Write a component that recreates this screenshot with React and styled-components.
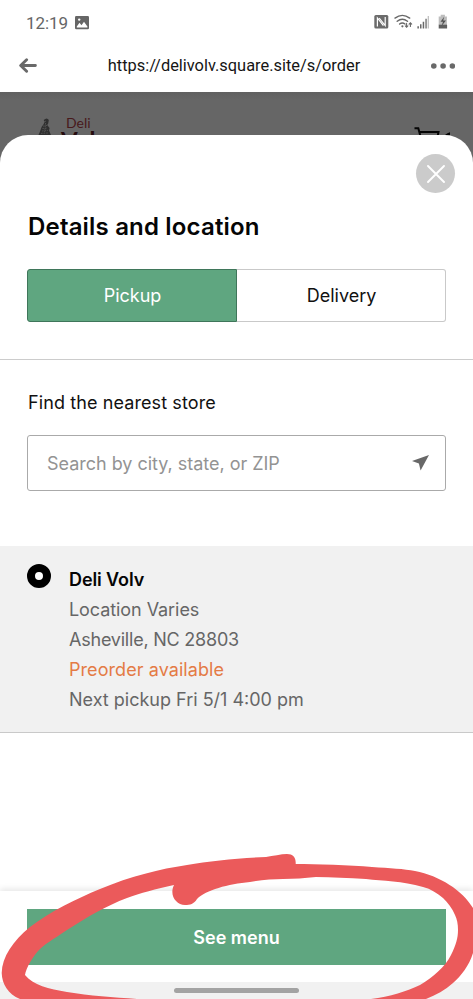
import styled, { createGlobalStyle } from 'styled-components';

const App = () => {
    return (
        <Screen>
            <GlobalStyle />
            <StatusBar>
                <Clock>12:19</Clock>
                <PictureIcon />
                <StatusIcons />
            </StatusBar>
            <BrowserBar>
                <BackIcon />
                <Address>https://delivolv.square.site/s/order</Address>
                <MoreIcon />
            </BrowserBar>
            <Backdrop>
                <SiteHeader>
                    <FigureIcon />
                    <Brand>
                        <BrandTop>Deli</BrandTop>
                        <BrandBottom>Volv</BrandBottom>
                    </Brand>
                    <CartIcon />
                </SiteHeader>
                <Sheet>
                    <CloseRow>
                        <CloseButton aria-label="Close">
                            <svg width="18" height="18" viewBox="0 0 18 18" fill="none" stroke="#fff" strokeWidth="1.9" strokeLinecap="round">
                                <path d="M1 1 17 17M17 1 1 17" />
                            </svg>
                        </CloseButton>
                    </CloseRow>
                    <Title>Details and location</Title>
                    <Tabs>
                        <Tab $active>Pickup</Tab>
                        <Tab>Delivery</Tab>
                    </Tabs>
                    <Finder>
                        <Label>Find the nearest store</Label>
                        <SearchBox>
                            <Search type="text" placeholder="Search by city, state, or ZIP" />
                            <svg width="17" height="16" viewBox="0 0 17 16">
                                <path d="M17 0 0 6.1 6.9 8.4 8.6 15.6Z" fill="#686868" />
                            </svg>
                        </SearchBox>
                    </Finder>
                    <Store>
                        <Radio />
                        <StoreInfo>
                            <Line $color="#050505" $weight="600" $spacing="-0.1px">Deli Volv</Line>
                            <Line $spacing="-0.07px">Location Varies</Line>
                            <Line $spacing="-0.22px">Asheville, NC 28803</Line>
                            <Line $color="#e47b45" $spacing="0.07px">Preorder available</Line>
                            <Line>Next pickup Fri 5/1 4:00 pm</Line>
                        </StoreInfo>
                    </Store>
                    <Footer>
                        <MenuButton>See menu</MenuButton>
                    </Footer>
                    <NavBar>
                        <Handle />
                    </NavBar>
                </Sheet>
            </Backdrop>
            <Marker viewBox="0 0 473 149">
                <path
                    fill="#eb5a5b"
                    d="M295.7 14C316 14 350 15 372 17C390 18 404 19 415 21C440 26 462 40 473 58L478 80L473 103C469 116 461 126 453 133C445 140 436 145 426 149H371C390 147 407 141 420 135C433 127 445 117 451 105C456 95 458 88 458 80C458 74 457 69 455 65C452 58 448 53 443 48C437 43 431 39 423 37C402 31 383 31 366 29C348 28 332 27 316 27C304 28 295 29 283 29C273 29 262 30 250 32C228 34 206 40 197 49C194 54 190 55 185 55C176 55 169 45 174 35C156 39 140 43 127 48C106 56 89 66 67 80C52 90 44 95 40 99C33 106 26 118 25 125C33 135 49 139 67 142C90 146 113 147 137 149H20C8 144 2 134 1.7 123C2 107 13 91 30 77C51 61 76 49 100 39C131 26 160 19 187 15C210 11 238 8 266 7C273 6 281 4 287 4C293 4 296 7 295.7 14Z"
                />
            </Marker>
        </Screen>
    )
}

const PictureIcon = () => (
    <svg width="14" height="14" viewBox="0 0 14 14">
        <rect width="14" height="13.3" rx="1.2" fill="#666" />
        <path d="M1.8 10.4 4.5 6.8 6.5 9.2 9 5.8 12.4 10.4V11.4H1.8Z" fill="#fff" />
        <circle cx="4.2" cy="3.6" r="1.2" fill="#fff" />
    </svg>
)

// nfc, wifi, signal and battery
const StatusIcons = () => (
    <Indicators width="76" height="17" viewBox="0 0 76 17">
        <rect x="0.3" y="1" width="14" height="13.5" rx="1.5" fill="#6b6b6b" />
        <path d="M3.4 12.6V4L9.4 11.6M11.2 3V11.6L5.2 4" fill="none" stroke="#fff" strokeWidth="1.2" />
        <g fill="none" stroke="#686868" strokeWidth="1.4" strokeLinecap="round">
            <path d="M21 4.1Q28.3-1.3 35.7 4.1M23.2 7.2Q28.3 3.2 33.5 7.2M25.6 10Q28.3 8 31 10" />
            <path d="M32.6 9.4V13M31.3 11.9 32.6 13.2 33.9 11.9M36.4 12.5V9M35.1 10.1 36.4 8.8 37.7 10.1" strokeWidth="1.1" />
        </g>
        <circle cx="28.4" cy="12.3" r="1.1" fill="#686868" />
        <path d="M43.4 12.3h1.5V14.5h-1.5zM46 10.3h1.5V14.5H46zM48.7 7.7h1.5V14.5h-1.5zM51.4 4.8h1.3V14.5h-1.3z" fill="#686868" />
        <path d="M53.7 2h1.2V14.5h-1.2z" fill="#bbb" />
        <path d="M66.7 0.8h4.2V2.4h2V11h-8.2V2.4h2z" fill="#bdbdbd" />
        <path d="M64.7 10.7h8.4V14.5h-8.4z" fill="#5f5f5f" />
        <path d="M70.2 2.8 66.5 7.8H69L67.5 12 72 6.6H69.2Z" fill="#505050" />
    </Indicators>
)

const BackIcon = () => (
    <svg width="18" height="15" viewBox="0 0 18 15" fill="none" stroke="#696969" strokeWidth="2.9" strokeLinecap="round" strokeLinejoin="round">
        <path d="M16.4 7.5H2M7.6 1.7 1.7 7.5 7.6 13.3" />
    </svg>
)

const MoreIcon = () => (
    <svg width="24" height="6" viewBox="0 0 24 6" fill="#696969">
        <circle cx="2.8" cy="3" r="2.8" />
        <circle cx="12.1" cy="3" r="2.8" />
        <circle cx="21.4" cy="3" r="2.8" />
    </svg>
)

const FigureIcon = () => (
    <Figure width="14" height="17" viewBox="0 0 14 17">
        <path d="M5.7 2Q9-1 10.8 2L10.2 5.5 9.2 7 11.6 10 11 12.5 13 17H0.5L2 13.5 3.6 9 5.4 6.5 6.6 4Z" fill="#303030" />
        <path d="M6.4 3.5 9 3M5 8.2 9 7.4M4.4 10.5 9.4 10M4 13 10 12.4M3 15.4 10 15M7.6 5 6.6 14" stroke="#606060" strokeWidth="0.7" strokeDasharray="1.6 1" />
    </Figure>
)

const CartIcon = () => (
    <Cart width="36" height="24" viewBox="0 0 36 24" fill="none" stroke="#050505" strokeWidth="2">
        <path d="M0.5 1.2H4.3L8.5 17H22L24.5 5H5.5" />
        <circle cx="38" cy="14.5" r="9.5" fill="#050505" stroke="none" />
    </Cart>
)

const GlobalStyle = createGlobalStyle`
    * {
        box-sizing: border-box;
    }
    body {
        margin: 0;
        background: #fff;
        overflow: hidden;
    }
    svg {
        display: block;
        flex-shrink: 0;
    }
`;

const Screen = styled.div`
    position: relative;
    display: flex;
    flex-direction: column;
    width: 100%;
    max-width: 473px;
    height: 999px;
    overflow: hidden;
    background: #fff;
    color: #111;
    font-family: Inter, "Liberation Sans", sans-serif;
`;

const StatusBar = styled.div`
    display: flex;
    align-items: center;
    gap: 8px;
    height: 39px;
    padding: 6px 23px 0 26px;
`;

const Clock = styled.span`
    width: 41px;
    font-family: Roboto, sans-serif;
    font-size: 17px;
    line-height: 20px;
    letter-spacing: -0.1px;
    white-space: nowrap;
    color: #666;
`;

const Indicators = styled.svg`
    margin-left: auto;
`;

const BrowserBar = styled.div`
    display: flex;
    align-items: center;
    justify-content: space-between;
    height: 53px;
    padding: 0 18px 0 19px;
`;

const Address = styled.span`
    font-family: Roboto, sans-serif;
    font-size: 16.4px;
    line-height: 20px;
    color: #151515;
`;

const Backdrop = styled.div`
    flex: 1;
    display: flex;
    flex-direction: column;
    background: linear-gradient(#606060, #666 8px);
`;

const SiteHeader = styled.header`
    display: flex;
    align-items: flex-start;
    height: 43px;
    padding: 23px 23px 0 38px;
    overflow: hidden;
`;

const Figure = styled.svg`
    margin-top: 3px;
`;

const Brand = styled.div`
    display: flex;
    flex-direction: column;
    margin-left: 9px;
`;

const BrandTop = styled.span`
    padding-left: 5px;
    font-family: Lato, sans-serif;
    font-size: 14px;
    line-height: 15px;
    color: #48191c;
`;

const BrandBottom = styled.span`
    font-family: Lato, sans-serif;
    font-size: 24px;
    font-weight: 700;
    line-height: 24px;
    margin-top: -1px;
    color: #250b0d;
`;

const Cart = styled.svg`
    margin: 12px 0 0 auto;
`;

const Sheet = styled.main`
    flex: 1;
    display: flex;
    flex-direction: column;
    border-radius: 28px 28px 0 0;
    background: #fff;
`;

const CloseRow = styled.div`
    display: flex;
    justify-content: flex-end;
    padding: 19px 18px 0;
`;

const CloseButton = styled.button`
    display: flex;
    align-items: center;
    justify-content: center;
    width: 39px;
    height: 39px;
    padding: 0;
    border: 0;
    border-radius: 50%;
    background: #cbcbcb;
`;

const Title = styled.h1`
    margin: 18px 27px 0;
    padding-left: 1px;
    font-size: 24px;
    font-weight: 600;
    line-height: 32px;
    letter-spacing: 0.18px;
    color: #050505;
`;

const Tabs = styled.div`
    display: flex;
    height: 53px;
    margin: 26px 27px 37px;
`;

const Tab = styled.button`
    flex: ${(props) => (props.$active ? '0 0 210px' : '1')};
    padding: 0 0 0 1px;
    border: 1px solid ${(props) => (props.$active ? '#3f765a' : '#c9c9c9')};
    border-left-width: ${(props) => (props.$active ? '1px' : '0')};
    border-radius: ${(props) => (props.$active ? '3px 0 0 3px' : '0 3px 3px 0')};
    background: ${(props) => (props.$active ? '#5fa680' : '#fff')};
    color: ${(props) => (props.$active ? '#fff' : '#111')};
    font-family: inherit;
    font-size: 18px;
`;

const Finder = styled.section`
    height: 187px;
    padding: 31px 27px 0;
    border-top: 1px solid #ccc;
`;

const Label = styled.div`
    padding-left: 1px;
    font-size: 18px;
    line-height: 24px;
    letter-spacing: 0.1px;
`;

const SearchBox = styled.div`
    display: flex;
    align-items: center;
    height: 56px;
    margin-top: 20px;
    padding: 0 16px 0 19px;
    border: 1px solid #aaa;
    border-radius: 3px;
`;

const Search = styled.input`
    flex: 1;
    min-width: 0;
    padding: 0;
    border: 0;
    outline: 0;
    font-family: inherit;
    font-size: 18px;
    letter-spacing: -0.02px;
    &::placeholder {
        color: #939393;
        opacity: 1;
    }
`;

const Store = styled.section`
    display: flex;
    gap: 18px;
    height: 187px;
    padding: 18px 27px 0;
    border-bottom: 1px solid #c9c9c9;
    background: #f1f1f1;
`;

const Radio = styled.span`
    width: 24px;
    height: 24px;
    border: 8px solid #000;
    border-radius: 50%;
    background: #fff;
`;

const StoreInfo = styled.div`
    display: flex;
    flex-direction: column;
    padding-top: 1px;
`;

const Line = styled.span`
    font-size: 18px;
    font-weight: ${(props) => props.$weight || 400};
    line-height: 29.9px;
    letter-spacing: ${(props) => props.$spacing || '0'};
    color: ${(props) => props.$color || '#666'};
`;

const Footer = styled.footer`
    margin-top: auto;
    padding: 18px 27px 17px;
    box-shadow: 0 -2px 6px rgba(0, 0, 0, 0.1);
`;

const MenuButton = styled.button`
    display: block;
    width: 100%;
    height: 56px;
    padding: 0;
    border: 0;
    background: #5fa680;
    color: #fff;
    font-family: inherit;
    font-size: 18px;
    font-weight: 600;
`;

const NavBar = styled.div`
    display: flex;
    justify-content: center;
    height: 17px;
    padding-top: 6px;
    background: #f1f1f1;
    z-index: 1;
`;

const Handle = styled.span`
    width: 125px;
    height: 5px;
    border-radius: 3px;
    background: #a3a3a3;
`;

// hand drawn circle over the menu button
const Marker = styled.svg`
    position: absolute;
    left: 0;
    bottom: 0;
    width: 473px;
    height: 149px;
    z-index: 2;
    pointer-events: none;
`;

export default App;
